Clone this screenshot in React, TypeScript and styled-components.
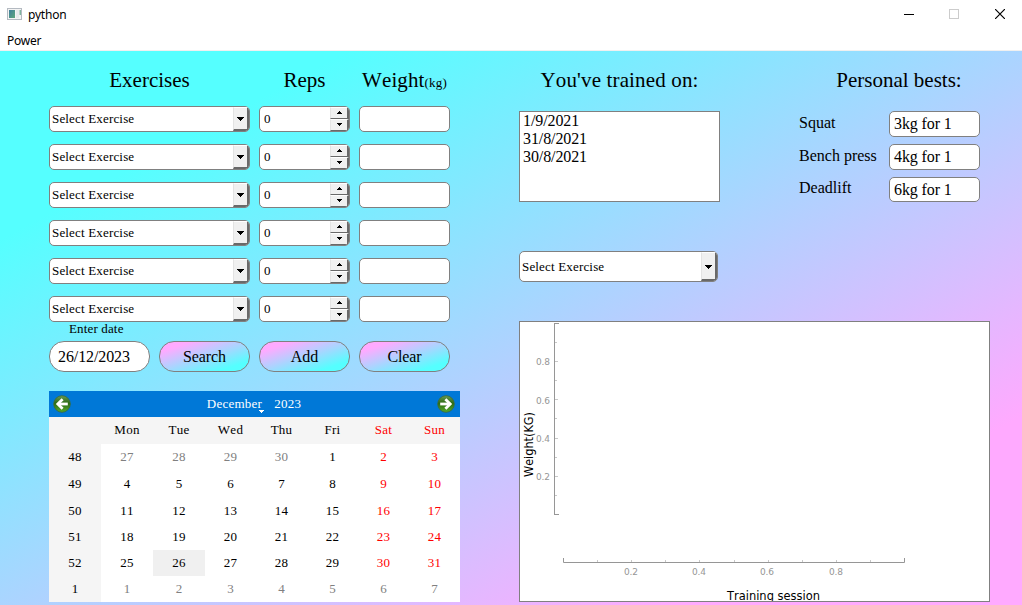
import React from "react";
import styled, { createGlobalStyle } from "styled-components";

const PINK = "#ffaaff";
const CYAN = "#55ffff";
const SERIF = '"Liberation Serif", "Times New Roman", serif';
const UI = '"Noto Sans", "Open Sans", sans-serif';

const Global = createGlobalStyle`
  *, *::before, *::after { box-sizing: border-box; }
  html, body { margin: 0; padding: 0; background: #fff; overflow: hidden; }
`;

const Window = styled.div`
  width: 1022px;
  height: 605px;
  display: flex;
  flex-direction: column;
  overflow: hidden;
  background: #fff;
  color: #000;
  font-family: ${SERIF};
  font-kerning: none;
`;

const TitleBar = styled.header`
  height: 30px;
  flex: none;
  display: flex;
  align-items: center;
  padding: 0 1px 0 7px;
  font: 12px/30px ${UI};
`;

const AppIcon = styled.svg`
  margin-bottom: 2px;
`;

const AppTitle = styled.span`
  flex: 1;
  padding-left: 6px;
  letter-spacing: -0.2px;
`;

const WindowControl = styled.span<{ $shift?: number }>`
  width: 45px;
  height: 28px;
  align-self: flex-start;
  display: flex;
  align-items: center;
  justify-content: center;
  padding-left: ${(p) => p.$shift ?? 0}px;
`;

const MenuBar = styled.nav`
  height: 21px;
  flex: none;
  padding-left: 7px;
  border-bottom: 1px solid #f0f0f0;
  font: 12px/21px ${UI};
  letter-spacing: -0.25px;
`;

const Content = styled.main`
  flex: 1;
  min-height: 0;
  display: flex;
  align-items: flex-start;
  gap: 59px;
  padding: 14px 0 0 49px;
  background: linear-gradient(to bottom right, ${CYAN} 17%, ${PINK} 83%);
`;

const LogPanel = styled.section`
  width: 411px;
  flex: none;
`;

const Heading = styled.h2<{ $track?: number }>`
  margin: 0;
  height: 31px;
  font-size: 21px;
  line-height: 31px;
  font-weight: 400;
  letter-spacing: ${(p) => p.$track ?? 0}px;
  text-align: center;
  white-space: nowrap;
  small { font-size: 13px; letter-spacing: 0.2px; }
`;

const EntryGrid = styled.div`
  display: grid;
  grid-template-columns: 201px 91px 91px;
  column-gap: 9px;
`;

const EntryHeader = styled(EntryGrid)`
  margin-bottom: 10px;
`;

const EntryRows = styled(EntryGrid)`
  row-gap: 12px;
`;

const Field = styled.div<{ $w?: number; $h?: number }>`
  width: ${(p) => (p.$w ? `${p.$w}px` : "100%")};
  height: ${(p) => p.$h ?? 26}px;
  display: flex;
  align-items: center;
  border: 1px solid #808080;
  border-radius: 5px;
  background: #fff;
  overflow: hidden;
  font-size: 13px;
  letter-spacing: 0.17px;
`;

const FieldText = styled.span<{ $pad: number }>`
  flex: 1;
  padding-left: ${(p) => p.$pad}px;
  white-space: nowrap;
`;

const Bevel = styled.span`
  display: flex;
  align-items: center;
  justify-content: center;
  background: #f0f0f0;
  border: solid;
  border-width: 1px 2px 2px 1px;
  border-color: #fff #696969 #696969 #e3e3e3;
`;

const DropButton = styled(Bevel)`
  width: 16px;
  height: 100%;
  padding-top: 1px;
`;

const Stepper = styled.span`
  width: 19px;
  height: 100%;
  display: grid;
  grid-template-rows: 12px 12px;
`;

const StepButton = styled(Bevel)`
  border-width: 1px 2px 1px 1px;
  padding-bottom: 1px;
`;

const DateCaption = styled.div`
  height: 14px;
  padding-left: 20px;
  font-size: 13px;
  line-height: 14px;
  letter-spacing: 0.15px;
`;

const Actions = styled.div`
  display: flex;
  gap: 9px;
  margin: 5px 0 19px;
`;

const Pill = styled.div`
  height: 31px;
  border: 1px solid #808080;
  border-radius: 15px;
  font-size: 16px;
  line-height: 30px;
  letter-spacing: -0.1px;
`;

const DateInput = styled(Pill)`
  width: 101px;
  padding-left: 8px;
  background: #fff;
`;

const ActionButton = styled(Pill)`
  width: 91px;
  text-align: center;
  background: linear-gradient(to bottom right, ${PINK} 17%, ${CYAN} 83%);
`;

const Calendar = styled.div`
  width: 411px;
  font-size: 13px;
  letter-spacing: 0.25px;
`;

const CalendarNav = styled.div`
  height: 26px;
  display: flex;
  align-items: center;
  justify-content: space-between;
  padding: 0 5px 0 4px;
  background: #0078d7;
  color: #fff;
`;

const MonthYear = styled.div`
  display: flex;
  gap: 12px;
  position: relative;
  height: 16px;
  line-height: 16px;
`;

const MonthArrow = styled.svg`
  position: absolute;
  left: 52px;
  bottom: -1px;
`;

const Days = styled.div`
  display: grid;
  grid-template-columns: 52px 52px 52px repeat(5, 51px);
  grid-template-rows: 27px 27px 27px repeat(4, 26px);
  background: #fff;
`;

type Tone = "normal" | "muted" | "weekend";
const toneColor: Record<Tone, string> = { normal: "#000", muted: "#808080", weekend: "#ff0000" };

const Day = styled.span<{ $tone?: Tone; $bg?: string; $tall?: boolean }>`
  display: flex;
  align-items: center;
  justify-content: center;
  padding-bottom: ${(p) => (p.$tall ? 2 : 0)}px;
  color: ${(p) => toneColor[p.$tone ?? "normal"]};
  background: ${(p) => p.$bg ?? "transparent"};
`;

const StatsPanel = styled.section`
  width: 471px;
  flex: none;
`;

const StatsTop = styled.div`
  display: flex;
  gap: 79px;
  height: 186px;
`;

const Trained = styled.div`
  width: 201px;
`;

const DateList = styled.ul`
  height: 91px;
  margin: 15px 0 0;
  padding: 0 3px;
  list-style: none;
  border: 1px solid #808080;
  background: #fff;
  font-size: 16px;
  line-height: 18px;
  letter-spacing: -0.1px;
`;

const Bests = styled.div`
  width: 181px;
`;

const BestsHeading = styled(Heading)`
  margin: 0 0 15px 19px;
`;

const BestRow = styled.div<{ $line: number }>`
  display: flex;
  justify-content: space-between;
  margin-bottom: 7px;
  font-size: 16px;
  line-height: ${(p) => p.$line}px;
`;

const BestValue = styled(Field)`
  font-size: 16px;
  line-height: 24px;
  letter-spacing: -0.1px;
`;

const ChartBox = styled.div`
  height: 281px;
  margin-top: 39px;
  border: 1px solid #808080;
  background: #fff;
  svg { display: block; }
`;

const Caret = ({ up = false, w = 7 }: { up?: boolean; w?: number }) => {
  const h = (w + 1) / 2;
  return (
    <svg width={w} height={h} shapeRendering="crispEdges">
      {Array.from({ length: h }, (_, i) => (
        <rect key={i} x={i} y={up ? h - 1 - i : i} width={w - 2 * i} height="1" />
      ))}
    </svg>
  );
};

const ExerciseSelect = ({ w, h }: { w?: number; h?: number }) => (
  <Field $w={w} $h={h}>
    <FieldText $pad={2}>Select Exercise</FieldText>
    <DropButton><Caret /></DropButton>
  </Field>
);

const RepsInput = () => (
  <Field>
    <FieldText $pad={4}>0</FieldText>
    <Stepper>
      <StepButton><Caret up w={5} /></StepButton>
      <StepButton><Caret w={5} /></StepButton>
    </Stepper>
  </Field>
);

const NavArrow = ({ flip = false }: { flip?: boolean }) => (
  <svg width="18" height="18" viewBox="0 0 18 18">
    <defs>
      <linearGradient id="orb" x1="0" y1="0" x2="0" y2="1">
        <stop offset="0" stopColor="#6a9a55" />
        <stop offset="0.45" stopColor="#2c6b12" />
        <stop offset="1" stopColor="#55ab2c" />
      </linearGradient>
    </defs>
    <circle cx="9" cy="9" r="8.3" fill="url(#orb)" stroke="#3d6b35" strokeWidth="0.8" />
    <g transform={flip ? "translate(18 0) scale(-1 1)" : undefined} fill="none" stroke="#fff" strokeWidth="2.8">
      <path d="M9.6 4.3 L4.8 9 L9.6 13.7" />
      <path d="M5 9 H14.8" />
    </g>
  </svg>
);

const weekdays = ["Mon", "Tue", "Wed", "Thu", "Fri", "Sat", "Sun"];
const weeks = [
  [48, 27, 28, 29, 30, 1, 2, 3],
  [49, 4, 5, 6, 7, 8, 9, 10],
  [50, 11, 12, 13, 14, 15, 16, 17],
  [51, 18, 19, 20, 21, 22, 23, 24],
  [52, 25, 26, 27, 28, 29, 30, 31],
  [1, 1, 2, 3, 4, 5, 6, 7],
];

const dayTone = (row: number, col: number, n: number): Tone => {
  if ((row === 0 && n > 20) || row === 5) return "muted";
  return col >= 5 ? "weekend" : "normal";
};

const bests = [
  { name: "Squat", value: "3kg for 1", h: 26, line: 24 },
  { name: "Bench press", value: "4kg for 1", h: 26, line: 24 },
  { name: "Deadlift", value: "6kg for 1", h: 25, line: 22 },
];

const yTicks = [20, 39, 58, 77, 96, 116, 135, 154, 173];
const xTicks = [77, 111, 145, 179, 214, 248, 282, 316, 350];

const Chart = () => (
  <svg width="469" height="279" viewBox="0 0 469 279" fontFamily='"DejaVu Sans", sans-serif'>
    <g fill="none" stroke="#969696">
      <path d="M39 1.5 H35 M34.5 1 V193 M34 192.5 H39" />
      <path d="M43.5 236 V240.5 H384.5 V236" />
    </g>
    <g stroke="#c8c8c8">
      {yTicks.map((y, i) => (
        <path key={y} d={`M35 ${y + 0.5} H${i % 2 ? 38 : 37}`} />
      ))}
      {xTicks.map((x) => (
        <path key={x} d={`M${x + 0.5} 238 V240`} />
      ))}
    </g>
    <g fill="#969696" fontSize="9">
      {["0.8", "0.6", "0.4", "0.2"].map((t, i) => (
        <text key={t} x="16" y={[43, 82, 120, 158][i]} textLength="14">{t}</text>
      ))}
      {["0.2", "0.4", "0.6", "0.8"].map((t, i) => (
        <text key={t} x={[104, 172, 240, 309][i]} y="253" textLength="14">{t}</text>
      ))}
    </g>
    <g fontSize="12.3">
      <text transform="translate(13.3 155) rotate(-90)" textLength="65" lengthAdjust="spacingAndGlyphs">Weight(KG)</text>
      <text x="207" y="278" fontSize="12" textLength="93" lengthAdjust="spacingAndGlyphs">Training session</text>
    </g>
  </svg>
);

export default function App() {
  return (
    <Window>
      <Global />
      <TitleBar>
        <AppIcon width="15" height="12" viewBox="0 0 15 12">
          <defs>
            <linearGradient id="appIcon" x1="0" y1="0" x2="1" y2="1">
              <stop offset="0" stopColor="#3f7f9c" />
              <stop offset="1" stopColor="#5fa87c" />
            </linearGradient>
          </defs>
          <rect x="0.5" y="0.5" width="14" height="11" fill="#f4f4f4" stroke="#b4bac1" />
          <rect x="2" y="2" width="6" height="8" fill="url(#appIcon)" />
          <rect x="9" y="2" width="3" height="8" fill="#e8eaec" />
          <rect x="12.5" y="2" width="1.5" height="5" fill="#7fb5a0" />
        </AppIcon>
        <AppTitle>python</AppTitle>
        <WindowControl>
          <svg width="10" height="10"><path d="M0 5.5 H10" stroke="#000" /></svg>
        </WindowControl>
        <WindowControl>
          <svg width="10" height="10"><rect x="0.5" y="0.5" width="9" height="9" fill="none" stroke="#ccc" /></svg>
        </WindowControl>
        <WindowControl $shift={2}>
          <svg width="10" height="10"><path d="M0 0 L10 10 M10 0 L0 10" stroke="#000" strokeWidth="1.2" /></svg>
        </WindowControl>
      </TitleBar>
      <MenuBar>Power</MenuBar>
      <Content>
        <LogPanel>
          <EntryHeader>
            <Heading>Exercises</Heading>
            <Heading>Reps</Heading>
            <Heading $track={0.1}>Weight<small>(kg)</small></Heading>
          </EntryHeader>
          <EntryRows>
            {Array.from({ length: 6 }, (_, i) => (
              <React.Fragment key={i}>
                <ExerciseSelect />
                <RepsInput />
                <Field />
              </React.Fragment>
            ))}
          </EntryRows>
          <DateCaption>Enter date</DateCaption>
          <Actions>
            <DateInput>26/12/2023</DateInput>
            <ActionButton>Search</ActionButton>
            <ActionButton>Add</ActionButton>
            <ActionButton>Clear</ActionButton>
          </Actions>
          <Calendar>
            <CalendarNav>
              <NavArrow />
              <MonthYear>
                <span>December</span>
                <span>2023</span>
                <MonthArrow width="5" height="3" shapeRendering="crispEdges">
                  <path d="M0 0 H5 V1 H4 V2 H3 V3 H2 V2 H1 V1 H0 Z" fill="#fff" />
                </MonthArrow>
              </MonthYear>
              <NavArrow flip />
            </CalendarNav>
            <Days>
              <Day $bg="#f5f5f5" />
              {weekdays.map((d, i) => (
                <Day key={d} $tall $bg="#f5f5f5" $tone={i >= 5 ? "weekend" : "normal"}>{d}</Day>
              ))}
              {weeks.map(([week, ...days], r) => (
                <React.Fragment key={r}>
                  <Day $tall={r < 2} $bg="#f5f5f5">{week}</Day>
                  {days.map((n, c) => (
                    <Day key={c} $tall={r < 2} $tone={dayTone(r, c, n)} $bg={n === 26 ? "#f0f0f0" : undefined}>{n}</Day>
                  ))}
                </React.Fragment>
              ))}
            </Days>
          </Calendar>
        </LogPanel>
        <StatsPanel>
          <StatsTop>
            <Trained>
              <Heading $track={0.15}>You've trained on:</Heading>
              <DateList>
                <li>1/9/2021</li>
                <li>31/8/2021</li>
                <li>30/8/2021</li>
              </DateList>
            </Trained>
            <Bests>
              <BestsHeading>Personal bests:</BestsHeading>
              {bests.map((b) => (
                <BestRow key={b.name} $line={b.line}>
                  <span>{b.name}</span>
                  <BestValue $w={91} $h={b.h}><FieldText $pad={4}>{b.value}</FieldText></BestValue>
                </BestRow>
              ))}
            </Bests>
          </StatsTop>
          <ExerciseSelect w={199} h={31} />
          <ChartBox><Chart /></ChartBox>
        </StatsPanel>
      </Content>
    </Window>
  );
}
